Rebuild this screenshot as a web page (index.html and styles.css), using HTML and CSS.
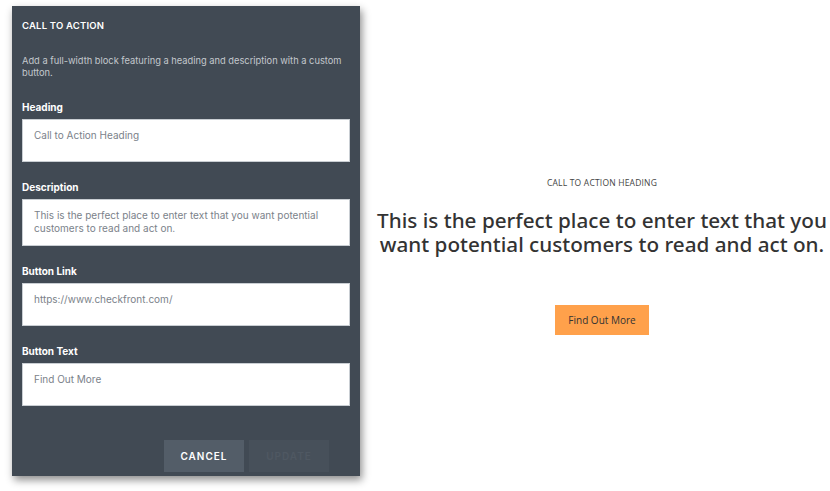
FILE: index.html
```html
<!DOCTYPE html>
<html>
<head>
<meta charset="utf-8">
<link rel="stylesheet" href="styles.css">
</head>
<body>
<div class="page">
  <aside class="panel">
    <div class="panel-title">CALL TO ACTION</div>
    <p class="panel-desc">Add a full-width block featuring a heading and description with a custom button.</p>
    <div class="field first">
      <div class="label">Heading</div>
      <div class="input">Call to Action Heading</div>
    </div>
    <div class="field">
      <div class="label">Description</div>
      <div class="input tall">This is the perfect place to enter text that you want potential customers to read and act on.</div>
    </div>
    <div class="field">
      <div class="label">Button Link</div>
      <div class="input">https://www.checkfront.com/</div>
    </div>
    <div class="field">
      <div class="label">Button Text</div>
      <div class="input">Find Out More</div>
    </div>
    <div class="actions">
      <button class="btn cancel">CANCEL</button>
      <button class="btn update">UPDATE</button>
    </div>
  </aside>
  <main class="preview">
    <div class="cta-heading">CALL TO ACTION HEADING</div>
    <div class="cta-text">This is the perfect place to enter text that you want potential customers to read and act on.</div>
    <a class="cta-btn">Find Out More</a>
  </main>
</div>
</body>
</html>
```
FILE: styles.css
```css
html, body {
  margin: 0;
  padding: 0;
  background: #ffffff;
}
body {
  font-family: Inter, "Noto Sans", sans-serif;
}
.page {
  display: flex;
  width: 830px;
  height: 491px;
}
.panel {
  box-sizing: border-box;
  flex: 0 0 348px;
  margin: 6px 0 0 12px;
  width: 348px;
  height: 470px;
  background: #414a54;
  padding: 0 10px;
  box-shadow: 2px 4px 8px rgba(0, 0, 0, 0.45);
  display: flex;
  flex-direction: column;
}
.panel-title {
  color: #ffffff;
  font-size: 9.5px;
  font-weight: 600;
  letter-spacing: 0.2px;
  margin-top: 14px;
  line-height: 12px;
}
.panel-desc {
  color: #c3c8cd;
  font-size: 9.3px;
  line-height: 12px;
  margin: 23px 0 0 0;
}
.field {
  display: flex;
  flex-direction: column;
}
.label {
  color: #ffffff;
  font-size: 10px;
  font-weight: 700;
  line-height: 12px;
  margin-top: 19px;
  margin-bottom: 6px;
}
.field.first .label {
  margin-top: 22px;
}
.input {
  box-sizing: border-box;
  height: 43px;
  background: #ffffff;
  border: 1px solid #c9ced3;
  padding: 9px 11px;
  color: #7b828a;
  font-size: 10px;
  line-height: 13px;
}
.input.tall {
  height: 47px;
  padding-top: 9px;
}
.actions {
  display: flex;
  justify-content: flex-end;
  gap: 5px;
  margin-top: auto;
  margin-bottom: 4px;
  padding-right: 21px;
}
.btn {
  width: 80px;
  height: 32px;
  border: none;
  font-family: Inter, "Noto Sans", sans-serif;
  font-size: 10px;
  font-weight: 600;
  letter-spacing: 1px;
}
.cancel {
  background: #535d68;
  color: #ffffff;
}
.update {
  background: #47505a;
  color: #4f5862;
}
.preview {
  flex: 1;
  min-width: 0;
  display: flex;
  flex-direction: column;
  align-items: center;
  padding-top: 177px;
  padding-left: 14px;
}
.cta-heading {
  font-family: "Open Sans", sans-serif;
  font-size: 8.5px;
  color: #444444;
  letter-spacing: 0.2px;
  line-height: 12px;
}
.cta-text {
  margin-top: 19px;
  width: 456px;
  font-family: "Noto Sans", sans-serif;
  font-size: 20.7px;
  font-weight: 500;
  line-height: 24px;
  color: #333333;
  text-align: center;
}
.cta-btn {
  margin-top: 49px;
  width: 94px;
  height: 30px;
  background: #ffa14b;
  color: #333333;
  font-family: "Open Sans", sans-serif;
  font-size: 10px;
  display: flex;
  align-items: center;
  justify-content: center;
}
```
